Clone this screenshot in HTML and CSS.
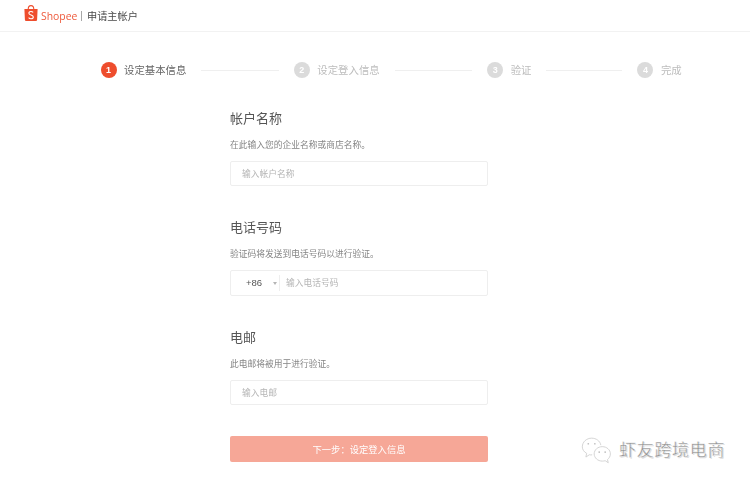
FILE: index.html
```html
<!DOCTYPE html>
<html lang="zh">
<head>
<meta charset="utf-8">
<title>申请主帐户</title>
<link rel="stylesheet" href="styles.css">
</head>
<body>
<div class="page">
  <header class="topbar">
    <svg class="bag" viewBox="0 0 14 16" width="14" height="16" aria-hidden="true">
      <path d="M0.4 4H13.6L13.1 14.8A1.2 1.2 0 0 1 11.9 16H2.1A1.2 1.2 0 0 1 0.9 14.8Z" fill="#ee4d2d"/>
      <path d="M4.2 4.4C4.2 2 5.3 0.6 7 0.6S9.8 2 9.8 4.4" fill="none" stroke="#ee4d2d" stroke-width="1.1"/>
      <path d="M9.2 7.4C8.6 6.8 7.9 6.5 7 6.5C5.9 6.5 4.9 7.1 4.9 8.2C4.9 10.5 9.3 9.5 9.3 11.9C9.3 13.1 8.2 13.7 7 13.7C6.1 13.7 5.2 13.3 4.6 12.6" fill="none" stroke="#fff" stroke-width="1.1"/>
    </svg>
    <span class="brand">Shopee</span>
    <span class="sep"></span>
    <span class="apptitle">申请主帐户</span>
  </header>

  <ol class="steps">
    <li class="step active"><span class="dot">1</span><span class="label">设定基本信息</span></li>
    <li class="rule"></li>
    <li class="step"><span class="dot">2</span><span class="label">设定登入信息</span></li>
    <li class="rule"></li>
    <li class="step"><span class="dot">3</span><span class="label">验证</span></li>
    <li class="rule short"></li>
    <li class="step"><span class="dot">4</span><span class="label">完成</span></li>
  </ol>

  <form class="form">
    <section class="field">
      <h2 class="title">帐户名称</h2>
      <p class="desc">在此输入您的企业名称或商店名称。</p>
      <div class="box"><span class="ph">输入帐户名称</span></div>
    </section>
    <section class="field">
      <h2 class="title">电话号码</h2>
      <p class="desc">验证码将发送到电话号码以进行验证。</p>
      <div class="box phone">
        <span class="code">+86</span>
        <span class="caret"></span>
        <span class="ph tight">输入电话号码</span>
      </div>
    </section>
    <section class="field">
      <h2 class="title">电邮</h2>
      <p class="desc">此电邮将被用于进行验证。</p>
      <div class="box"><span class="ph">输入电邮</span></div>
    </section>
    <div class="submit">下一步：设定登入信息</div>
  </form>

  <div class="watermark">
    <svg class="wechat" viewBox="0 0 32 28" width="31" height="27" aria-hidden="true">
      <g fill="none" stroke="#cfcfcf" stroke-width="0.9">
        <path d="M11.5 18.5C10.5 18.7 9.5 18.6 8.6 18.4L5 20.8L5.8 17C3 15.4 1.3 13 1.3 10.2C1.3 5 5.8 1.2 11 1.2C15.6 1.2 19.6 4 20.5 8.4"/>
        <path d="M30.4 17.5C30.4 13.3 26.6 10 22 10S13.6 13.3 13.6 17.5S17.4 25 22 25C23.1 25 24.1 24.8 25 24.6L28.2 26.7L27.4 23.4C29.2 22 30.4 19.9 30.4 17.5Z"/>
      </g>
      <g fill="#bdbdbd">
        <circle cx="7.5" cy="7" r="0.9"/><circle cx="14.3" cy="7" r="0.9"/>
        <circle cx="18.8" cy="15.6" r="0.9"/><circle cx="25" cy="15.6" r="0.9"/>
      </g>
    </svg>
    <span class="wm-text">虾友跨境电商</span>
  </div>
</div>
</body>
</html>
```
FILE: styles.css
```css
* { box-sizing: border-box; }
html, body { margin: 0; padding: 0; background: #fff; }
.page {
  position: relative;
  width: 750px;
  height: 485px;
  overflow: hidden;
  font-family: "Noto Sans CJK SC", "Liberation Sans", sans-serif;
  color: #555;
}
.topbar {
  display: flex;
  align-items: center;
  height: 32px;
  padding: 0 0 0 24px;
  border-bottom: 1px solid #f2f2f2;
  filter: blur(0.4px);
}
.bag { flex: none; margin-top: -5px; }
.brand {
  margin-left: 3px;
  font-family: "Open Sans", sans-serif;
  font-size: 10.4px;
  line-height: 14px;
  color: #ee5a3c;
  width: 36px;
  white-space: nowrap;
}
.sep { width: 1px; height: 10px; background: #a8a8a8; margin: 1px 5px 0 4px; }
.apptitle { font-size: 10.2px; line-height: 14px; color: #4a4a4a; }

.steps {
  display: flex;
  align-items: center;
  list-style: none;
  margin: 0;
  padding: 30px 0 0 100.5px;
  height: 46px;
  font-size: 10.4px;
  filter: blur(0.4px);
}
.step { display: flex; align-items: center; gap: 7.5px; flex: none; }
.dot {
  width: 16px;
  height: 16px;
  border-radius: 50%;
  background: #dbdbdb;
  color: #fff;
  font: bold 9px/16px "Liberation Sans", sans-serif;
  text-align: center;
}
.label { color: #bdbdbd; line-height: 14px; }
.active .dot { background: #ee4d2d; }
.active .label { color: #666; }
.rule { flex: none; width: 77.5px; height: 1px; background: #efefef; margin: 0 15px; }
.short { width: 76px; }

.form {
  width: 258px;
  margin: 25.25px 0 0 230px;
  filter: blur(0.4px);
}
.field { height: 109.5px; }
.title { margin: 0; padding-top: 5.5px; font-size: 13px; line-height: 18px; font-weight: 400; color: #555; }
.desc { margin: 12px 0 0; font-size: 8.75px; line-height: 12px; color: #858585; white-space: nowrap; }
.box {
  display: flex;
  align-items: center;
  height: 25.5px;
  margin-top: 10px;
  padding-left: 11px;
  border: 1px solid #eeeeee;
  border-radius: 2px;
  background: #fff;
}
.ph { font-size: 8.75px; line-height: 12px; color: #b5b5b5; }
.phone { padding-left: 15px; }
.code { width: 27px; font: 9.5px/12px "Liberation Sans", sans-serif; color: #555; }
.caret {
  width: 0;
  height: 0;
  border: 2.5px solid transparent;
  border-top: 3px solid #b5b5b5;
  border-bottom: 0;
  margin-right: 2px;
}
.tight { border-left: 1px solid #eeeeee; padding-left: 6px; line-height: 16px; }
.submit {
  height: 26px;
  margin-top: 4.25px;
  border-radius: 2px;
  background: #f6a797;
  color: #fff;
  font-size: 9.3px;
  line-height: 26px;
  text-align: center;
}
.watermark {
  position: absolute;
  left: 581px;
  top: 437px;
  display: flex;
  align-items: center;
  gap: 7px;
}
.wechat { flex: none; }
.wm-text {
  margin-top: -3px;
  font-size: 17px;
  line-height: 26px;
  letter-spacing: 0.7px;
  color: #8f8f8f;
  -webkit-text-stroke: 0.3px #fff;
  text-shadow: 1px 1px 0 #e0e0e0;
}
```
